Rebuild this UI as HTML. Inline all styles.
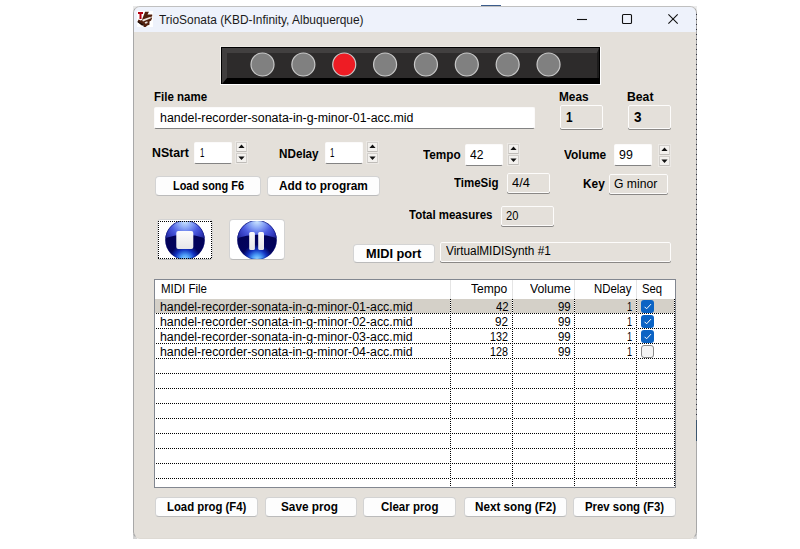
<!DOCTYPE html>
<html><head><meta charset="utf-8"><title>TrioSonata</title>
<style>
html,body{margin:0;padding:0;background:#fff;}
body{width:800px;height:549px;position:relative;overflow:hidden;font-family:"Liberation Sans",sans-serif;font-size:12px;color:#000;}
.a{position:absolute;box-sizing:border-box;}
.t{position:absolute;white-space:pre;line-height:1;transform-origin:0 0;display:block;}
#win{left:133px;top:6px;width:564px;height:533px;background:#e4e0da;border-radius:7px;border:1px solid #a8a8a8;border-top-color:#c0c0c0;border-bottom-color:#dedad4;}
.btn{background:#fdfdfd;border:1px solid #d3d3d3;border-bottom-color:#bbb;border-radius:4px;}
.inp{background:#fff;border:1px solid #fbfafa;border-bottom:1px solid #838383;border-radius:2px;}
.ro{background:#e4e0da;border:1px solid #fdfcfb;border-radius:2px;box-shadow:0 1px 0 #8a8886;}
.spb{background:#ece9e5;}
.spin{background:#f3f1ee;border:1px solid #d2cfcb;border-bottom-color:#bfbcb8;border-radius:1px;}
.led{width:24px;height:24px;border-radius:50%;background:#808080;border:1px solid #c8c8c8;top:52.5px;}
.hd{z-index:2;background:repeating-linear-gradient(90deg,#000 0 1px,#fff 1px 2px);height:1px;}
.vd{z-index:2;background:repeating-linear-gradient(180deg,#000 0 1px,#fff 1px 2px);width:1px;}
</style></head>
<body>
<div class="a" style="left:133px;top:6px;width:5px;height:5px;background:#e9e9e9"></div>
<div class="a" style="left:692px;top:6px;width:5px;height:5px;background:#ececec"></div>
<div class="a" style="left:133px;top:534px;width:4px;height:5px;background:#d2d2d2"></div>
<div class="a" style="left:693px;top:534px;width:4px;height:5px;background:#d8d8d8"></div>
<div id="win" class="a"></div>
<div class="a" style="left:134px;top:7px;width:562px;height:25px;background:#eef2fb;border-radius:6px 6px 0 0"></div>
<svg class="a" style="left:570px;top:7px" width="120" height="25" viewBox="0 0 120 25"><g stroke="#111" stroke-width="1.1" fill="none"><path d="M7 12.5H17"/><rect x="52.5" y="7.5" width="9" height="9" rx="1"/><path d="M98.4 7.4l9.3 9.3M107.7 7.4l-9.3 9.3"/></g></svg>
<svg class="a" style="left:137px;top:11px" width="16" height="16" viewBox="0 0 16 16"><rect width="16" height="16" fill="#fff"/>
<path d="M1 1h5v2H4.5v5h-2V3H1z" fill="#b3000f"/>
<g transform="translate(-0.6 -0.3) scale(1.09)"><path d="M8 1h3.5l-1.3 2.6H14.5V5L13 6l1.5 .5-1 2.5-1.5 1v3l-2 .5-1.5 1.5H6.5l.5-2-2 .5-2-1.5-2-2 1-2 2 1 1-.5L6 6z" fill="#52200d"/>
<path d="M5.2 8.3L13 5.6l.3 1.4L6 10z" fill="#efe9e4"/>
<path d="M1.5 9.5l5.5 3.7-.5.8L1 10.5z" fill="#1b0d08"/><path d="M7.5 10.5l2.5-.8.3 1.5-2 .8z" fill="#e8e0da"/></g>
</svg>
<div class="a" style="left:481px;top:5px;width:20px;height:1px;background:#3b5c8c"></div>
<div class="a" style="left:696px;top:420px;width:1px;height:21px;background:#3c566e"></div>
<div class="a" style="left:696px;top:14px;width:1px;height:404px;background:repeating-linear-gradient(180deg,#2b2b3a 0 1px,transparent 1px 5px)"></div>
<div class="a" style="left:220px;top:46px;width:381px;height:39px;background:#fff"></div>
<div class="a" style="left:221px;top:47px;width:379px;height:37px;background:#000"></div>
<div class="a" style="left:220px;top:46px;width:381px;height:1px;background:#ebe8e3"></div>
<div class="a" style="left:220px;top:46px;width:1px;height:38px;background:#f3f1ed"></div>
<div class="a" style="left:222px;top:48px;width:377px;height:30px;background:#2d2b2b;border-top:5px solid #424040;border-left:5px solid #403e3e;border-right:2px solid #1c1b1b;"></div>
<svg class="a" style="left:222px;top:78px" width="6" height="6"><path d="M0 0H5L0 6z" fill="#403e3e"/></svg>
<svg class="a" style="left:220px;top:46px" width="381" height="39"><circle cx="42.50" cy="18.5" r="11.5" fill="#808080" stroke="#c8c8c8" stroke-width="1.2"/><circle cx="83.36" cy="18.5" r="11.5" fill="#808080" stroke="#c8c8c8" stroke-width="1.2"/><circle cx="124.22" cy="18.5" r="11.5" fill="#ee1c24" stroke="#c8c8c8" stroke-width="1.2"/><circle cx="165.08" cy="18.5" r="11.5" fill="#808080" stroke="#c8c8c8" stroke-width="1.2"/><circle cx="205.94" cy="18.5" r="11.5" fill="#808080" stroke="#c8c8c8" stroke-width="1.2"/><circle cx="246.80" cy="18.5" r="11.5" fill="#808080" stroke="#c8c8c8" stroke-width="1.2"/><circle cx="287.66" cy="18.5" r="11.5" fill="#808080" stroke="#c8c8c8" stroke-width="1.2"/><circle cx="328.52" cy="18.5" r="11.5" fill="#808080" stroke="#c8c8c8" stroke-width="1.2"/></svg>
<div class="a inp" style="left:154px;top:107px;width:381px;height:22px"></div>
<div class="a ro" style="left:560px;top:105px;width:43px;height:24px"></div>
<div class="a ro" style="left:628px;top:105px;width:43px;height:24px"></div>
<div class="a inp" style="left:194px;top:142px;width:38px;height:22px"></div>
<div class="a spb" style="left:235px;top:141px;width:13px;height:23px"></div>
<div class="a spin" style="left:236px;top:142px;width:11px;height:10px"></div>
<div class="a spin" style="left:236px;top:153px;width:11px;height:10px"></div>
<svg class="a" style="left:235px;top:141px" width="13" height="23" viewBox="0 0 13 23"><path d="M3.4 7.1L6.5 3.6 9.6 7.1zM3.4 15.4L6.5 18.9 9.6 15.4z" fill="#111"/></svg>
<div class="a inp" style="left:325px;top:142px;width:38px;height:22px"></div>
<div class="a spb" style="left:366px;top:141px;width:13px;height:23px"></div>
<div class="a spin" style="left:367px;top:142px;width:11px;height:10px"></div>
<div class="a spin" style="left:367px;top:153px;width:11px;height:10px"></div>
<svg class="a" style="left:366px;top:141px" width="13" height="23" viewBox="0 0 13 23"><path d="M3.4 7.1L6.5 3.6 9.6 7.1zM3.4 15.4L6.5 18.9 9.6 15.4z" fill="#111"/></svg>
<div class="a inp" style="left:465px;top:144px;width:38px;height:22px"></div>
<div class="a spb" style="left:507px;top:143px;width:13px;height:23px"></div>
<div class="a spin" style="left:508px;top:144px;width:11px;height:10px"></div>
<div class="a spin" style="left:508px;top:155px;width:11px;height:10px"></div>
<svg class="a" style="left:507px;top:143px" width="13" height="23" viewBox="0 0 13 23"><path d="M3.4 7.1L6.5 3.6 9.6 7.1zM3.4 15.4L6.5 18.9 9.6 15.4z" fill="#111"/></svg>
<div class="a inp" style="left:614px;top:144px;width:38px;height:22px"></div>
<div class="a spb" style="left:658px;top:144px;width:13px;height:23px"></div>
<div class="a spin" style="left:659px;top:145px;width:11px;height:10px"></div>
<div class="a spin" style="left:659px;top:156px;width:11px;height:10px"></div>
<svg class="a" style="left:658px;top:144px" width="13" height="23" viewBox="0 0 13 23"><path d="M3.4 7.1L6.5 3.6 9.6 7.1zM3.4 15.4L6.5 18.9 9.6 15.4z" fill="#111"/></svg>
<div class="a btn" style="left:155px;top:176px;width:106px;height:20px;"></div>
<div class="a btn" style="left:267px;top:176px;width:113px;height:20px;"></div>
<div class="a btn" style="left:353px;top:244px;width:82px;height:19px;"></div>
<div class="a btn" style="left:155px;top:497px;width:103px;height:20px;"></div>
<div class="a btn" style="left:265px;top:497px;width:92px;height:20px;"></div>
<div class="a btn" style="left:363px;top:497px;width:93px;height:20px;"></div>
<div class="a btn" style="left:464px;top:497px;width:103px;height:20px;"></div>
<div class="a btn" style="left:573px;top:497px;width:103px;height:20px;"></div>
<div class="a ro" style="left:507px;top:173px;width:43px;height:20px"></div>
<div class="a ro" style="left:609px;top:174px;width:59px;height:20px"></div>
<div class="a ro" style="left:501px;top:206px;width:53px;height:20px"></div>
<div class="a ro" style="left:440px;top:242px;width:231px;height:20px"></div>
<div class="a btn" style="left:157px;top:219px;width:56px;height:41px;background:#fff;"></div>
<div class="a" style="left:158px;top:221px;width:54px;height:38px;background:repeating-linear-gradient(90deg,#000 0 1px,transparent 1px 2px) 0 0/100% 1px no-repeat,repeating-linear-gradient(90deg,#000 0 1px,transparent 1px 2px) 0 100%/100% 1px no-repeat,repeating-linear-gradient(180deg,#000 0 1px,transparent 1px 2px) 0 0/1px 100% no-repeat,repeating-linear-gradient(180deg,#000 0 1px,transparent 1px 2px) 100% 0/1px 100% no-repeat;z-index:3"></div>
<div class="a btn" style="left:229px;top:219px;width:56px;height:41px;background:#fff;"></div>
<svg class="a" style="left:163.6px;top:218.9px" width="42" height="42" viewBox="-21 -21 42 42">
<defs><radialGradient id="g184" cx="0" cy="20" r="26" gradientUnits="userSpaceOnUse"><stop offset="0" stop-color="#a8e0ff"/><stop offset=".2" stop-color="#4a9cf8"/><stop offset=".4" stop-color="#1232c0"/><stop offset=".6" stop-color="#02035e"/><stop offset="1" stop-color="#020258"/></radialGradient>
<radialGradient id="h184" cx="0" cy="-19" r="24" gradientUnits="userSpaceOnUse"><stop offset="0" stop-color="#d0eaff"/><stop offset=".3" stop-color="#8aa6f6"/><stop offset=".6" stop-color="#4c5ce0"/><stop offset=".85" stop-color="#333cc0"/><stop offset="1" stop-color="#262c9c"/></radialGradient>
<linearGradient id="w184" x1="0" y1="-9" x2="0" y2="9" gradientUnits="userSpaceOnUse"><stop offset="0" stop-color="#fcfcfc"/><stop offset="1" stop-color="#e6e6e8"/></linearGradient>
<clipPath id="c184"><rect x="-21" y="-19" width="42" height="38"/></clipPath></defs>
<g clip-path="url(#c184)"><circle r="19.7" fill="url(#g184)"/>
<path d="M-19.6 -1.9A19.7 19.7 0 0 1 19.6 -1.9Q0 -8.5 -19.6 -1.9z" fill="url(#h184)"/>
<circle r="19.4" fill="none" stroke="#0a0f7a" stroke-opacity=".55" stroke-width=".8"/></g>
<rect x="-8.7" y="-8.9" width="17" height="18" rx="2" fill="url(#w184)"/></svg>
<svg class="a" style="left:236px;top:218.9px" width="42" height="42" viewBox="-21 -21 42 42">
<defs><radialGradient id="g257" cx="0" cy="20" r="26" gradientUnits="userSpaceOnUse"><stop offset="0" stop-color="#a8e0ff"/><stop offset=".2" stop-color="#4a9cf8"/><stop offset=".4" stop-color="#1232c0"/><stop offset=".6" stop-color="#02035e"/><stop offset="1" stop-color="#020258"/></radialGradient>
<radialGradient id="h257" cx="0" cy="-19" r="24" gradientUnits="userSpaceOnUse"><stop offset="0" stop-color="#d0eaff"/><stop offset=".3" stop-color="#8aa6f6"/><stop offset=".6" stop-color="#4c5ce0"/><stop offset=".85" stop-color="#333cc0"/><stop offset="1" stop-color="#262c9c"/></radialGradient>
<linearGradient id="w257" x1="0" y1="-9" x2="0" y2="9" gradientUnits="userSpaceOnUse"><stop offset="0" stop-color="#fcfcfc"/><stop offset="1" stop-color="#e6e6e8"/></linearGradient>
<clipPath id="c257"><rect x="-21" y="-19" width="42" height="38"/></clipPath></defs>
<g clip-path="url(#c257)"><circle r="19.7" fill="url(#g257)"/>
<path d="M-19.6 -1.9A19.7 19.7 0 0 1 19.6 -1.9Q0 -8.5 -19.6 -1.9z" fill="url(#h257)"/>
<circle r="19.4" fill="none" stroke="#0a0f7a" stroke-opacity=".55" stroke-width=".8"/></g>
<rect x="-7.8" y="-7.9" width="5.7" height="17.9" rx="1.5" fill="url(#w257)"/><rect x="1.2" y="-7.9" width="5.8" height="17.9" rx="1.5" fill="url(#w257)"/></svg>
<div class="a" style="left:154px;top:279px;width:522px;height:209px;background:#fff;border:1px solid #828790"></div>
<div class="a" style="left:155px;top:299px;width:520px;height:14px;background:#d4d0c8"></div>
<div class="a hd" style="left:156px;top:313px;width:519px"></div>
<div class="a hd" style="left:156px;top:328px;width:519px"></div>
<div class="a hd" style="left:156px;top:343px;width:519px"></div>
<div class="a hd" style="left:156px;top:358px;width:519px"></div>
<div class="a hd" style="left:156px;top:373px;width:519px"></div>
<div class="a hd" style="left:156px;top:388px;width:519px"></div>
<div class="a hd" style="left:156px;top:403px;width:519px"></div>
<div class="a hd" style="left:156px;top:418px;width:519px"></div>
<div class="a hd" style="left:156px;top:433px;width:519px"></div>
<div class="a hd" style="left:156px;top:448px;width:519px"></div>
<div class="a hd" style="left:156px;top:463px;width:519px"></div>
<div class="a hd" style="left:156px;top:478px;width:519px"></div>
<div class="a" style="left:450px;top:280px;width:1px;height:19px;background:#e5e5e5"></div>
<div class="a vd" style="left:450px;top:299px;height:188px"></div>
<div class="a" style="left:512px;top:280px;width:1px;height:19px;background:#e5e5e5"></div>
<div class="a vd" style="left:512px;top:299px;height:188px"></div>
<div class="a" style="left:574px;top:280px;width:1px;height:19px;background:#e5e5e5"></div>
<div class="a vd" style="left:574px;top:299px;height:188px"></div>
<div class="a" style="left:636px;top:280px;width:1px;height:19px;background:#e5e5e5"></div>
<div class="a vd" style="left:636px;top:299px;height:188px"></div>
<div class="a vd" style="left:674px;top:299px;height:188px"></div>
<div class="a" style="left:641px;top:300px;width:13px;height:13px;background:#0b63c4;border-radius:3px"></div>
<svg class="a" style="left:641px;top:300px" width="13" height="13" viewBox="0 0 13 13"><path d="M3.6 6.8l2 2 4.4-4.7" stroke="#fff" stroke-width="1" fill="none"/></svg>
<div class="a" style="left:641px;top:315px;width:13px;height:13px;background:#0b63c4;border-radius:3px"></div>
<svg class="a" style="left:641px;top:315px" width="13" height="13" viewBox="0 0 13 13"><path d="M3.6 6.8l2 2 4.4-4.7" stroke="#fff" stroke-width="1" fill="none"/></svg>
<div class="a" style="left:641px;top:330px;width:13px;height:13px;background:#0b63c4;border-radius:3px"></div>
<svg class="a" style="left:641px;top:330px" width="13" height="13" viewBox="0 0 13 13"><path d="M3.6 6.8l2 2 4.4-4.7" stroke="#fff" stroke-width="1" fill="none"/></svg>
<div class="a" style="left:641px;top:345px;width:13px;height:13px;background:#f3f3f3;border:1px solid #8a8a8a;border-radius:3px"></div>
<span class="t" style="left:158.70px;top:14.00px;font-size:12px;transform:scaleX(0.9925);color:#1a1a1a">TrioSonata (KBD-Infinity, Albuquerque)</span>
<span class="t" style="left:153.98px;top:91.00px;font-size:12px;font-weight:bold;transform:scaleX(0.9597);color:#000">File name</span>
<span class="t" style="left:159.96px;top:112.00px;font-size:12px;transform:scaleX(1.0324);color:#000">handel-recorder-sonata-in-g-minor-01-acc.mid</span>
<span class="t" style="left:558.99px;top:91.00px;font-size:12px;font-weight:bold;transform:scaleX(0.9849);color:#000">Meas</span>
<span class="t" style="left:626.97px;top:91.00px;font-size:12px;font-weight:bold;transform:scaleX(1.0171);color:#000">Beat</span>
<span class="t" style="left:566.47px;top:110.00px;font-size:14px;font-weight:bold;transform:scaleX(0.8466);color:#000">1</span>
<span class="t" style="left:634.18px;top:110.00px;font-size:14px;font-weight:bold;transform:scaleX(0.9668);color:#000">3</span>
<span class="t" style="left:151.90px;top:147.00px;font-size:12px;font-weight:bold;transform:scaleX(1.0253);color:#000">NStart</span>
<span class="t" style="left:199.84px;top:147.00px;font-size:12px;transform:scaleX(0.6573);color:#000">1</span>
<span class="t" style="left:278.99px;top:148.00px;font-size:12px;font-weight:bold;transform:scaleX(0.9738);color:#000">NDelay</span>
<span class="t" style="left:330.34px;top:147.00px;font-size:12px;transform:scaleX(0.6573);color:#000">1</span>
<span class="t" style="left:423.00px;top:149.00px;font-size:12px;font-weight:bold;transform:scaleX(0.9806);color:#000">Tempo</span>
<span class="t" style="left:470.20px;top:149.00px;font-size:12px;transform:scaleX(1.0081);color:#000">42</span>
<span class="t" style="left:564.25px;top:149.00px;font-size:12px;font-weight:bold;transform:scaleX(0.9925);color:#000">Volume</span>
<span class="t" style="left:618.73px;top:149.00px;font-size:12px;transform:scaleX(1.0317);color:#000">99</span>
<span class="t" style="left:173.13px;top:180.00px;font-size:12px;font-weight:bold;transform:scaleX(0.9102);color:#000">Load song F6</span>
<span class="t" style="left:278.67px;top:180.00px;font-size:12px;font-weight:bold;transform:scaleX(0.9875);color:#000">Add to program</span>
<span class="t" style="left:454.24px;top:177.00px;font-size:12px;font-weight:bold;transform:scaleX(0.9580);color:#000">TimeSig</span>
<span class="t" style="left:512.18px;top:177.00px;font-size:12px;transform:scaleX(1.0701);color:#000">4/4</span>
<span class="t" style="left:582.74px;top:178.00px;font-size:12px;font-weight:bold;transform:scaleX(0.9875);color:#000">Key</span>
<span class="t" style="left:613.97px;top:178.00px;font-size:12px;transform:scaleX(1.0134);color:#000">G minor</span>
<span class="t" style="left:409.24px;top:209.00px;font-size:12px;font-weight:bold;transform:scaleX(0.9571);color:#000">Total measures</span>
<span class="t" style="left:505.76px;top:210.00px;font-size:12px;transform:scaleX(0.9280);color:#000">20</span>
<span class="t" style="left:366.13px;top:248.00px;font-size:12px;font-weight:bold;transform:scaleX(1.0637);color:#000">MIDI port</span>
<span class="t" style="left:446.37px;top:245.00px;font-size:12px;transform:scaleX(0.9841);color:#000">VirtualMIDISynth #1</span>
<span class="t" style="left:160.79px;top:283.00px;font-size:12px;transform:scaleX(0.9588);color:#000">MIDI File</span>
<span class="t" style="left:159.96px;top:301.00px;font-size:12px;transform:scaleX(1.0292);color:#000">handel-recorder-sonata-in-g-minor-01-acc.mid</span>
<span class="t" style="left:159.96px;top:316.00px;font-size:12px;transform:scaleX(1.0292);color:#000">handel-recorder-sonata-in-g-minor-02-acc.mid</span>
<span class="t" style="left:159.96px;top:331.00px;font-size:12px;transform:scaleX(1.0292);color:#000">handel-recorder-sonata-in-g-minor-03-acc.mid</span>
<span class="t" style="left:159.96px;top:346.00px;font-size:12px;transform:scaleX(1.0292);color:#000">handel-recorder-sonata-in-g-minor-04-acc.mid</span>
<span class="t" style="left:167.06px;top:501.00px;font-size:12px;font-weight:bold;transform:scaleX(0.9450);color:#000">Load prog (F4)</span>
<span class="t" style="left:281.34px;top:501.00px;font-size:12px;font-weight:bold;transform:scaleX(0.9803);color:#000">Save prog</span>
<span class="t" style="left:380.93px;top:501.00px;font-size:12px;font-weight:bold;transform:scaleX(0.9564);color:#000">Clear prog</span>
<span class="t" style="left:474.99px;top:501.00px;font-size:12px;font-weight:bold;transform:scaleX(0.9744);color:#000">Next song (F2)</span>
<span class="t" style="left:585.04px;top:501.00px;font-size:12px;font-weight:bold;transform:scaleX(0.9494);color:#000">Prev song (F3)</span>
<span class="t" style="left:471.20px;top:283.00px;font-size:12px;transform:scaleX(1.0074);color:#000">Tempo</span>
<span class="t" style="left:529.58px;top:283.00px;font-size:12px;transform:scaleX(1.0221);color:#000">Volume</span>
<span class="t" style="left:594.29px;top:283.00px;font-size:12px;transform:scaleX(0.9504);color:#000">NDelay</span>
<span class="t" style="left:641.95px;top:283.00px;font-size:12px;transform:scaleX(0.9397);color:#000">Seq</span>
<span class="t" style="left:495.77px;top:301.00px;font-size:12px;transform:scaleX(0.9472);color:#000">42</span>
<span class="t" style="left:557.70px;top:301.00px;font-size:12px;transform:scaleX(0.9516);color:#000">99</span>
<span class="t" style="left:627.37px;top:301.00px;font-size:12px;transform:scaleX(0.7721);color:#000">1</span>
<span class="t" style="left:495.03px;top:316.00px;font-size:12px;transform:scaleX(0.9776);color:#000">92</span>
<span class="t" style="left:557.70px;top:316.00px;font-size:12px;transform:scaleX(0.9516);color:#000">99</span>
<span class="t" style="left:627.37px;top:316.00px;font-size:12px;transform:scaleX(0.7721);color:#000">1</span>
<span class="t" style="left:490.20px;top:331.00px;font-size:12px;transform:scaleX(0.8929);color:#000">132</span>
<span class="t" style="left:557.70px;top:331.00px;font-size:12px;transform:scaleX(0.9516);color:#000">99</span>
<span class="t" style="left:627.37px;top:331.00px;font-size:12px;transform:scaleX(0.7721);color:#000">1</span>
<span class="t" style="left:490.20px;top:346.00px;font-size:12px;transform:scaleX(0.8957);color:#000">128</span>
<span class="t" style="left:557.70px;top:346.00px;font-size:12px;transform:scaleX(0.9516);color:#000">99</span>
<span class="t" style="left:627.37px;top:346.00px;font-size:12px;transform:scaleX(0.7721);color:#000">1</span>
</body></html>
